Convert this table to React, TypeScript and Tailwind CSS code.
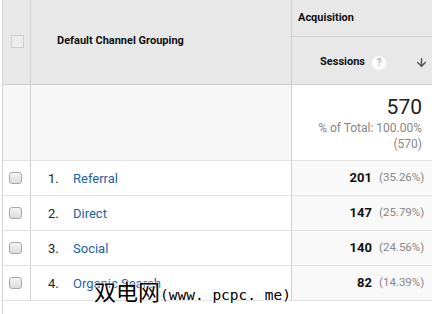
import { ArrowDown } from "lucide-react";

type Row = { rank: number; channel: string; sessions: number; share: string };

const rows: Row[] = [
  { rank: 1, channel: "Referral", sessions: 201, share: "(35.26%)" },
  { rank: 2, channel: "Direct", sessions: 147, share: "(25.79%)" },
  { rank: 3, channel: "Social", sessions: 140, share: "(24.56%)" },
  { rank: 4, channel: "Organic Search", sessions: 82, share: "(14.39%)" },
];

function RowCheckbox() {
  return (
    <span className="block w-[13px] h-[12px] rounded-[3px] border border-[#a9a9a9] bg-gradient-to-b from-[#f4f4f4] to-[#dcdcdc]" />
  );
}

export default function App() {
  return (
    <div className="relative w-[432px] h-[314px] overflow-hidden bg-white font-['Roboto',sans-serif] text-[#222]">
      <div className="ml-[2px] h-full border-l border-[#d4d4d4]">
        {/* Header */}
        <div className="flex h-[85px] bg-[#e8e8e8] border-b border-[#cfcfcf]">
          <div className="w-[28px] border-r border-[#cfcfcf] flex justify-center pt-[35px] pl-[1px]">
            <span className="block w-[13px] h-[13px] border border-[#cfcfcf] bg-[#ececec]" />
          </div>
          <div className="w-[261px] border-r border-[#cfcfcf] flex items-center pl-[26px] pb-[1px]">
            <span className="text-[11px] font-bold text-[#111]">Default Channel Grouping</span>
          </div>
          <div className="flex-1 flex flex-col">
            <div className="h-[37px] border-b border-[#cfcfcf] flex items-center pl-[6px] pt-[1px]">
              <span className="text-[11px] font-bold text-[#111]">Acquisition</span>
            </div>
            <div className="flex-1 flex items-center justify-end pr-[4px] pt-[4px]">
              <span className="text-[11px] font-bold text-[#111]">Sessions</span>
              <span className="ml-[7px] w-[14px] h-[14px] rounded-full bg-white text-[#b8b8b8] text-[10px] font-bold flex items-center justify-center">
                ?
              </span>
              <ArrowDown className="ml-[29px] text-[#555]" size={13} strokeWidth={2.75} />
            </div>
          </div>
        </div>

        {/* Totals */}
        <div className="flex h-[76px] border-b border-[#e2e2e2]">
          <div className="w-[28px] border-r border-[#cfcfcf] bg-[#f7f7f7]" />
          <div className="w-[261px] border-r border-[#cfcfcf] bg-[#f7f7f7]" />
          <div className="flex-1 flex flex-col items-end pr-[10px] pt-[10px] bg-white">
            <span className="text-[21px] leading-[25px] text-[#222]">570</span>
            <span className="text-[12px] leading-[17px] text-[#888]">% of Total: 100.00%</span>
            <span className="text-[12px] leading-[15px] text-[#888]">(570)</span>
          </div>
        </div>

        {/* Rows */}
        {rows.map((row) => (
          <div key={row.rank} className="flex h-[35px] border-b border-[#e2e2e2]">
            <div className="w-[28px] border-r border-[#cfcfcf] flex items-center justify-center pr-[2px]">
              <RowCheckbox />
            </div>
            <div className="w-[261px] border-r border-[#cfcfcf] flex items-center pt-[1px] text-[13px]">
              <span className="w-[42px] pl-[17px] text-[#222]">{row.rank}.</span>
              <span className="text-[#1b63ad]">{row.channel}</span>
            </div>
            <div className="flex-1 flex items-center justify-end pr-[8px] bg-[#f9f9f9]">
              <span className="text-[13px] font-bold text-[#111]">{row.sessions}</span>
              <span className="ml-[7px] w-[45px] text-right text-[11.5px] text-[#888]">{row.share}</span>
            </div>
          </div>
        ))}
      </div>

      {/* watermark overlay */}
      <div className="absolute left-[94px] top-[277px] flex items-baseline text-black [text-shadow:0_0_2px_#fff,0_0_2px_#fff,0_0_2px_#fff]">
        <span className="text-[22px] leading-[26px] font-['Noto_Sans_CJK_SC',sans-serif]">双电网</span>
        <span className="text-[14.5px] leading-[26px] font-['DejaVu_Sans_Mono',monospace]">(www. pcpc. me)</span>
      </div>
    </div>
  );
}
